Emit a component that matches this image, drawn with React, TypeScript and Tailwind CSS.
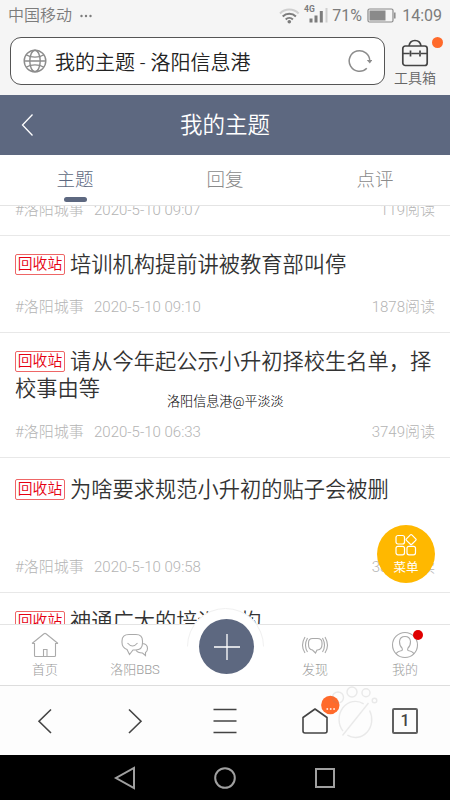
import { ReactNode } from "react";

type Topic = {
  title: string;
  date: string;
  reads: string;
  box: string;
};

const topics: Topic[] = [
  { title: "培训机构提前讲被教育部叫停", date: "2020-5-10 09:10", reads: "1878", box: "h-[97px] pt-[15px]" },
  { title: "请从今年起公示小升初择校生名单，择校事由等", date: "2020-5-10 06:33", reads: "3749", box: "h-[125px] pt-[15px]" },
  { title: "为啥要求规范小升初的贴子会被删", date: "2020-5-10 09:58", reads: "3826", box: "h-[135px] pt-[18px]" },
  { title: "神通广大的培训机构", date: "2020-5-10 10:12", reads: "2051", box: "h-[97px] pt-[15px]" },
];

function StatusBar() {
  return (
    <div className="flex h-[30px] items-center justify-between pl-2 pr-[8px] pt-[1px] text-[#7c7c7c]">
      <div className="flex items-center gap-[8px]">
        <span className="text-[16px] font-[350] leading-none">中国移动</span>
        <svg width="13" height="4" viewBox="0 0 13 4" fill="currentColor">
          <circle cx="1.5" cy="2" r="1.2" />
          <circle cx="6" cy="2" r="1.2" />
          <circle cx="10.5" cy="2" r="1.2" />
        </svg>
      </div>
      <div className="flex items-center">
        <svg width="52" height="24" viewBox="0 0 52 24" fill="none">
          <path d="M1 9.500a13 13 0 0 1 18.600 0" stroke="#cfcfcf" strokeWidth="2" />
          <path d="M3.700 12.500a9.300 9.300 0 0 1 13.200 0M6.700 15.500a5.200 5.200 0 0 1 7.200 0" stroke="#7c7c7c" strokeWidth="2" />
          <circle cx="10.300" cy="17.700" r="1.800" fill="#7c7c7c" />
          <text x="25" y="7.500" fontSize="8.5" fontWeight="700" fill="#7c7c7c">4G</text>
          <path d="M32 18.500v-4M37 18.500v-7M42.300 18.500V7" stroke="#7c7c7c" strokeWidth="3" />
          <path d="M47.500 18.500V4" stroke="#cfcfcf" strokeWidth="2" />
        </svg>
        <span className="ml-[1px] w-[32px] text-[16px] leading-none">71%</span>
        <svg className="ml-[3px]" width="29" height="15" viewBox="0 0 29 15" fill="none">
          <rect x="1" y="1" width="25" height="13" rx="1.5" stroke="#8a8a8a" strokeWidth="1.2" />
          <rect x="2.5" y="2.5" width="16" height="10" fill="#8a8a8a" />
          <path d="M27.8 4.5v6" stroke="#8a8a8a" strokeWidth="1.5" />
        </svg>
        <span className="ml-[6px] text-[16px] leading-none">14:09</span>
      </div>
    </div>
  );
}

function AddressBar() {
  return (
    <div className="flex h-[65px] pl-[10px] pt-[7px]">
      <div className="flex h-[48px] w-[375px] items-center rounded-[11px] border border-[#555] bg-white px-[12px]">
        <svg width="24" height="24" viewBox="0 0 24 24" fill="none" stroke="#8c8c8c" strokeWidth="1.4">
          <circle cx="12" cy="12" r="10.8" />
          <ellipse cx="12" cy="12" rx="5.2" ry="10.8" />
          <path d="M1.2 12h21.6M3.5 6c4.5 2.8 12.500 2.800 17 0M3.500 18c4.500-2.800 12.500-2.800 17 0" />
        </svg>
        <span className="ml-[8px] flex-1 pt-[3px] text-[20px] font-[350] leading-none text-[#222]">我的主题 - 洛阳信息港</span>
        <svg width="24" height="24" viewBox="0 0 24 24" fill="none">
          <path d="M21.800 12A10.300 10.300 0 1 0 18.800 19.300" stroke="#8c8c8c" strokeWidth="1.500" />
          <path d="M18.800 11h5.500l-2.500 3.500z" fill="#8c8c8c" />
        </svg>
      </div>
      <div className="relative flex w-[60px] flex-col items-center">
        <svg className="mt-[1px]" width="28" height="29" viewBox="0 0 28 29" fill="none" stroke="#444" strokeWidth="1.7">
          <rect x="1.800" y="8" width="24.400" height="19.500" rx="2.500" />
          <path d="M8 8c.5-3.500 3-5.500 6-5.500s5.500 2 6 5.500M2 15.500h6.500M10.500 15.500h7.500M20 15.500h6M9.500 12.500v6M19 12.500v6" />
        </svg>
        <span className="mt-[4px] text-[14px] font-[350] leading-[15px] text-[#666]">工具箱</span>
        <span className="absolute right-[2px] top-0 size-[11px] rounded-full bg-[#ff6a2b]" />
      </div>
    </div>
  );
}

function Tabs() {
  return (
    <div className="grid h-[51px] shrink-0 grid-cols-3 border-b border-[#e4e4e4] bg-white text-center text-[18.500px] font-light text-[#8a8a8a]">
      <div className="flex flex-col items-center pt-[14px] text-[#5d6880]">
        <span className="leading-[22px]">主题</span>
        <span className="mt-[6px] h-[5px] w-[23px] rounded-full bg-[#5d6880]" />
      </div>
      <div className="pt-[14px] leading-[22px]">回复</div>
      <div className="pt-[14px] leading-[22px]">点评</div>
    </div>
  );
}

function Meta({ date, reads }: { date: string; reads: string }) {
  return (
    <div className="flex shrink-0 text-[15px] font-light leading-[20px] text-[#b4b4b4]">
      <span className="w-[79px]">#洛阳城事</span>
      <span className="flex-1">{date}</span>
      <span>{reads}阅读</span>
    </div>
  );
}

function TopicRow({ topic }: { topic: Topic }) {
  return (
    <div className={`flex shrink-0 flex-col justify-between border-b border-[#e8e8e8] px-[15px] pb-[15px] ${topic.box}`}>
      <div className="text-[21.250px] font-[350] leading-[27px] text-[#333]">
        <span className="-mb-0.5 -mt-1.5 mr-[5px] inline-flex h-[21px] w-[50px] items-center justify-center rounded-[2px] border border-[#e66] align-middle text-[14.800px] leading-[19px] text-[#e60012]">
          回收站
        </span>
        {topic.title}
      </div>
      <Meta date={topic.date} reads={topic.reads} />
    </div>
  );
}

function TabItem({ label, children }: { label: string; children: ReactNode }) {
  return (
    <div className="flex flex-1 flex-col items-center pt-[6px] text-[13px] font-light text-[#9b9b9b]">
      <svg width="30" height="28" viewBox="0 0 30 28" fill="none" stroke="#aaa" strokeWidth="1.100">
        {children}
      </svg>
      <span className="mt-[3px] leading-[16px]">{label}</span>
    </div>
  );
}

function AppTabs() {
  return (
    <div className="relative flex h-[61px] shrink-0 border-t border-[#e4e4e4] bg-white">
      <TabItem label="首页">
        <path d="M2 12.500 14 2.800a1.500 1.500 0 0 1 2 0l12 9.700M2 12.500h2.500v12q0 1 1 1h19q1 0 1-1v-12H28M13.500 25.500v-7h3.500v7" />
      </TabItem>
      <TabItem label="洛阳BBS">
        <path d="M9 3.500h7q6.500 0 6.500 6.500v2q0 7-7 7h-2.500l-3.500 4.500-2.500-5Q2 16.500 2 11.500v-1.500q0-6.500 7-6.500zM7.500 12q5 6 10 0M22.500 12.500q5 .5 5 5 0 2.500-2 4v3l-3-2.500q-5 0-6.500-3" />
      </TabItem>
      <div className="relative w-[90px]">
        {/* the white ring rises above the bar; only its upper arc is outlined */}
        <div className="absolute left-[7px] top-[-17px] size-[77px] rounded-full bg-white" />
        <svg className="absolute left-[7px] top-[-17px]" width="77" height="77" viewBox="0 0 77 77" fill="none">
          <path d="M.5 38.500a38 38 0 0 1 76 0" stroke="#f0f0f0" />
        </svg>
        <div className="absolute left-[19px] top-[-6px] flex size-[55px] items-center justify-center rounded-full bg-[#5d6880]">
          <svg width="28" height="28" viewBox="0 0 28 28" stroke="#fff" strokeWidth="1.300">
            <path d="M14 1v26M1 14h26" />
          </svg>
        </div>
      </div>
      <TabItem label="发现">
        <path d="M12.500 7.500h5q4.500 0 4.500 4.500v1.500q0 5-4.500 5.500h-.5l-1.500 3-3-3Q8.500 18.500 8.500 13.500V12q0-4.500 4-4.500zM7.500 7q-4 7.500 0 14M5 6q-5 8.500 0 16M22.500 7q4 7.500 0 14M25 6q5 8.500 0 16" />
      </TabItem>
      <TabItem label="我的">
        <circle cx="15" cy="14" r="12.500" />
        <path d="M6 23q1-2.500 6-3.500.8-1 0-2.500-2.500-2-2.500-6.500Q10 5.500 15 5.500t5.500 5q0 4.500-2.500 6.500-.8 1.500 0 2.500 5 1 6 3.500" />
      </TabItem>
      <span className="absolute right-[27px] top-[5px] size-[10px] rounded-full bg-[#e00000]" />
    </div>
  );
}

function BrowserBar() {
  return (
    <div className="relative h-[70px] shrink-0 border-t border-[#ddd] bg-[#fdfdfd]">
      <div className="grid h-full grid-cols-5 place-items-center text-[#444]">
        <svg width="28" height="28" viewBox="0 0 28 28" fill="none" stroke="currentColor" strokeWidth="1.600">
          <path d="M20 2.500 8 14.200 20 26" />
        </svg>
        <svg width="28" height="28" viewBox="0 0 28 28" fill="none" stroke="currentColor" strokeWidth="1.600">
          <path d="m8 2.500 12 11.700L8 26" />
        </svg>
        <svg width="28" height="28" viewBox="0 0 28 28" fill="none" stroke="currentColor" strokeWidth="1.600">
          <path d="M2.500 2.500h23M2.500 14h23M2.500 25.500h23" />
        </svg>
        <svg width="28" height="28" viewBox="0 0 28 28" fill="none" stroke="currentColor" strokeWidth="1.600">
          <path d="M2 10.500 14 2l12 8.500V24q0 2-2 2H4q-2 0-2-2z" strokeLinejoin="round" />
        </svg>
        <div className="flex size-[26px] items-center justify-center rounded-[2px] border-2 border-[#606060] text-[16px] font-medium leading-none">
          1
        </div>
      </div>
      <svg className="absolute left-[315px] top-0" width="65" height="60" viewBox="0 0 65 60" fill="none">
        <circle cx="15.300" cy="19" r="9.200" fill="#ff6a2b" />
        <path d="M11.500 23h1.600M14.900 23h1.600M18.300 23h1.600" stroke="#fff" strokeWidth="1.400" />
        <g stroke="#888" strokeOpacity=".17" strokeWidth="1.400">
          <circle cx="23" cy="11.500" r="5.500" />
          <circle cx="37" cy="6" r="5" />
          <circle cx="51" cy="6.800" r="4" />
          <circle cx="59.500" cy="14.500" r="2.300" />
          <path d="M48.700 17.900A16.300 18 0 0 0 28 45.100M27.500 49.500l26-32.500M54.600 24.500A16.300 18 0 0 1 32.400 49.100" />
        </g>
      </svg>
    </div>
  );
}

function SystemNav() {
  return (
    <div className="flex h-[45px] shrink-0 items-center justify-center gap-[76px] bg-black">
      <svg width="24" height="24" viewBox="0 0 24 24" fill="none" stroke="#a0a0a0" strokeWidth="2">
        <path d="M21 2v20L3 12z" />
      </svg>
      <svg width="24" height="24" viewBox="0 0 24 24" fill="none" stroke="#a0a0a0" strokeWidth="2">
        <circle cx="12" cy="12" r="9.800" />
      </svg>
      <svg width="24" height="24" viewBox="0 0 24 24" fill="none" stroke="#a0a0a0" strokeWidth="2">
        <rect x="3" y="3" width="18" height="18" />
      </svg>
    </div>
  );
}

export default function App() {
  return (
    <div className="relative flex h-[800px] w-[450px] flex-col overflow-hidden bg-white font-[Roboto,'Noto_Sans_CJK_SC',sans-serif]">
      <div className="shrink-0 bg-[#f5f5f5]">
        <StatusBar />
        <AddressBar />
      </div>
      <div className="grid h-[60px] shrink-0 grid-cols-3 items-center bg-[#5d6880] text-white">
        <svg className="ml-[20px]" width="14" height="24" viewBox="0 0 14 24" fill="none" stroke="#fff" strokeWidth="1.300">
          <path d="M12.500 1.500 2.500 12l10 10.500" />
        </svg>
        <h1 className="text-center text-[22.500px] font-[350] leading-none">我的主题</h1>
      </div>
      <Tabs />
      <div className="flex min-h-0 flex-1 flex-col overflow-hidden">
        <div className="flex h-[30px] shrink-0 flex-col justify-end border-b border-[#e8e8e8] px-[15px] pb-[15px]">
          <Meta date="2020-5-10 09:07" reads="119" />
        </div>
        {topics.map((topic) => (
          <TopicRow key={topic.title} topic={topic} />
        ))}
      </div>
      <AppTabs />
      <BrowserBar />
      <SystemNav />

      <div className="absolute left-[167px] top-[393px] whitespace-nowrap text-[13.100px] font-light leading-[18px] text-black">
        洛阳信息港@平淡淡
      </div>
      <button className="absolute left-[377px] top-[525px] flex size-[58px] flex-col items-center rounded-full bg-[#ffb800] pt-[9px] text-white">
        <svg width="22" height="22" viewBox="0 0 22 22" fill="none" stroke="#fff" strokeWidth="1.200">
          <rect x="1" y="1.500" width="8.500" height="8.500" rx="2" />
          <rect x="1" y="12.300" width="8.500" height="8.500" rx="2" />
          <rect x="12" y="12.300" width="8.500" height="8.500" rx="2" />
          <rect x="12.300" y="1.800" width="7.600" height="7.600" rx="1" transform="rotate(45 16.100 5.600)" />
        </svg>
        <span className="mt-[5px] text-[12.500px] leading-[14px]">菜单</span>
      </button>
    </div>
  );
}
